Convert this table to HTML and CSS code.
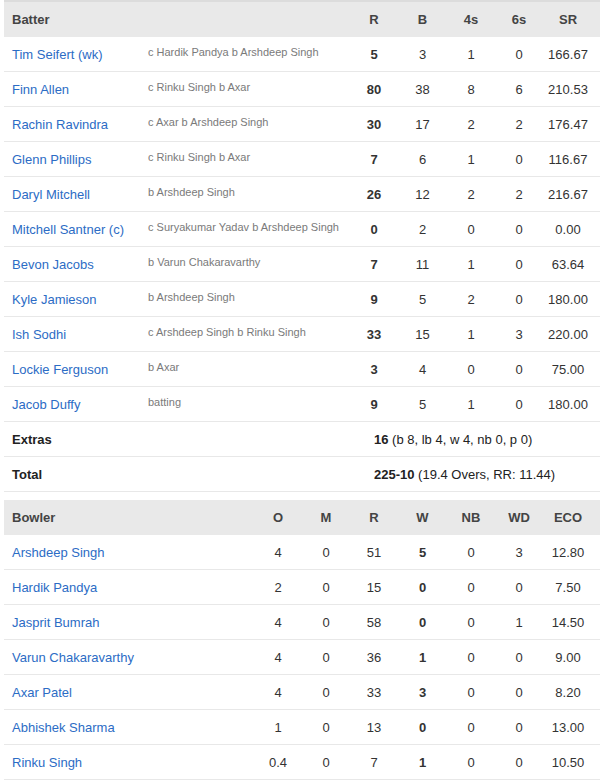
FILE: index.html
```html
<!DOCTYPE html>
<html>
<head>
<meta charset="utf-8">
<link rel="stylesheet" href="styles.css">
</head>
<body>
<div class="card">
  <div class="tbl bat">
    <div class="row head">
      <div class="c name">Batter</div><div class="c"></div>
      <div class="c n">R</div><div class="c n">B</div><div class="c n">4s</div><div class="c n">6s</div><div class="c n">SR</div>
    </div>
    <div class="row"><div class="c name"><a>Tim Seifert (wk)</a></div><div class="c dis">c Hardik Pandya b Arshdeep Singh</div><div class="c n b">5</div><div class="c n">3</div><div class="c n">1</div><div class="c n">0</div><div class="c n">166.67</div></div>
    <div class="row"><div class="c name"><a>Finn Allen</a></div><div class="c dis">c Rinku Singh b Axar</div><div class="c n b">80</div><div class="c n">38</div><div class="c n">8</div><div class="c n">6</div><div class="c n">210.53</div></div>
    <div class="row"><div class="c name"><a>Rachin Ravindra</a></div><div class="c dis">c Axar b Arshdeep Singh</div><div class="c n b">30</div><div class="c n">17</div><div class="c n">2</div><div class="c n">2</div><div class="c n">176.47</div></div>
    <div class="row"><div class="c name"><a>Glenn Phillips</a></div><div class="c dis">c Rinku Singh b Axar</div><div class="c n b">7</div><div class="c n">6</div><div class="c n">1</div><div class="c n">0</div><div class="c n">116.67</div></div>
    <div class="row"><div class="c name"><a>Daryl Mitchell</a></div><div class="c dis">b Arshdeep Singh</div><div class="c n b">26</div><div class="c n">12</div><div class="c n">2</div><div class="c n">2</div><div class="c n">216.67</div></div>
    <div class="row"><div class="c name"><a>Mitchell Santner (c)</a></div><div class="c dis">c Suryakumar Yadav b Arshdeep Singh</div><div class="c n b">0</div><div class="c n">2</div><div class="c n">0</div><div class="c n">0</div><div class="c n">0.00</div></div>
    <div class="row"><div class="c name"><a>Bevon Jacobs</a></div><div class="c dis">b Varun Chakaravarthy</div><div class="c n b">7</div><div class="c n">11</div><div class="c n">1</div><div class="c n">0</div><div class="c n">63.64</div></div>
    <div class="row"><div class="c name"><a>Kyle Jamieson</a></div><div class="c dis">b Arshdeep Singh</div><div class="c n b">9</div><div class="c n">5</div><div class="c n">2</div><div class="c n">0</div><div class="c n">180.00</div></div>
    <div class="row"><div class="c name"><a>Ish Sodhi</a></div><div class="c dis">c Arshdeep Singh b Rinku Singh</div><div class="c n b">33</div><div class="c n">15</div><div class="c n">1</div><div class="c n">3</div><div class="c n">220.00</div></div>
    <div class="row"><div class="c name"><a>Lockie Ferguson</a></div><div class="c dis">b Axar</div><div class="c n b">3</div><div class="c n">4</div><div class="c n">0</div><div class="c n">0</div><div class="c n">75.00</div></div>
    <div class="row"><div class="c name"><a>Jacob Duffy</a></div><div class="c dis">batting</div><div class="c n b">9</div><div class="c n">5</div><div class="c n">1</div><div class="c n">0</div><div class="c n">180.00</div></div>
    <div class="row sum"><div class="c name strong">Extras</div><div class="c"></div><div class="c val"><b>16</b> (b 8, lb 4, w 4, nb 0, p 0)</div></div>
    <div class="row sum"><div class="c name strong">Total</div><div class="c"></div><div class="c val"><b>225-10</b> (19.4 Overs, RR: 11.44)</div></div>
  </div>

  <div class="tbl bowl">
    <div class="row head">
      <div class="c name">Bowler</div>
      <div class="c n">O</div><div class="c n">M</div><div class="c n">R</div><div class="c n">W</div><div class="c n">NB</div><div class="c n">WD</div><div class="c n">ECO</div>
    </div>
    <div class="row"><div class="c name"><a>Arshdeep Singh</a></div><div class="c n">4</div><div class="c n">0</div><div class="c n">51</div><div class="c n b">5</div><div class="c n">0</div><div class="c n">3</div><div class="c n">12.80</div></div>
    <div class="row"><div class="c name"><a>Hardik Pandya</a></div><div class="c n">2</div><div class="c n">0</div><div class="c n">15</div><div class="c n b">0</div><div class="c n">0</div><div class="c n">0</div><div class="c n">7.50</div></div>
    <div class="row"><div class="c name"><a>Jasprit Bumrah</a></div><div class="c n">4</div><div class="c n">0</div><div class="c n">58</div><div class="c n b">0</div><div class="c n">0</div><div class="c n">1</div><div class="c n">14.50</div></div>
    <div class="row"><div class="c name"><a>Varun Chakaravarthy</a></div><div class="c n">4</div><div class="c n">0</div><div class="c n">36</div><div class="c n b">1</div><div class="c n">0</div><div class="c n">0</div><div class="c n">9.00</div></div>
    <div class="row"><div class="c name"><a>Axar Patel</a></div><div class="c n">4</div><div class="c n">0</div><div class="c n">33</div><div class="c n b">3</div><div class="c n">0</div><div class="c n">0</div><div class="c n">8.20</div></div>
    <div class="row"><div class="c name"><a>Abhishek Sharma</a></div><div class="c n">1</div><div class="c n">0</div><div class="c n">13</div><div class="c n b">0</div><div class="c n">0</div><div class="c n">0</div><div class="c n">13.00</div></div>
    <div class="row"><div class="c name"><a>Rinku Singh</a></div><div class="c n">0.4</div><div class="c n">0</div><div class="c n">7</div><div class="c n b">1</div><div class="c n">0</div><div class="c n">0</div><div class="c n">10.50</div></div>
  </div>
</div>
</body>
</html>
```

FILE: styles.css
```css
html, body {
  margin: 0;
  padding: 0;
  background: #fff;
}
body {
  font-family: "Liberation Sans", Arial, sans-serif;
  font-size: 13px;
  color: #333;
}
.card {
  margin-left: 4px;
  border-top: 2px solid #dcdcdc;
}
.tbl {
  display: flex;
  flex-direction: column;
}
.bowl {
  margin-top: 8px;
}
.row {
  display: grid;
  height: 35px;
  box-sizing: border-box;
  border-bottom: 1px solid #e8e8e8;
  align-items: center;
  padding-right: 7px;
}
.bat .row {
  grid-template-columns: 143px 203px 48px 49px 48px 48px 50px;
}
.bowl .row {
  grid-template-columns: 250px 48px 48px 48px 49px 48px 48px 50px;
}
.row.head {
  background: #e9e9e9;
  border-bottom: none;
  font-weight: bold;
  color: #444;
  height: 35px;
}
.bat .row.head {
  height: 35px;
}
.c {
  white-space: nowrap;
}
.name {
  padding-left: 8px;
}
.name a {
  color: #2c6cc5;
  text-decoration: none;
}
.dis {
  font-size: 11px;
  color: #7a7a7a;
  padding-bottom: 5px;
  padding-left: 1px;
}
.n {
  text-align: center;
  color: #333;
}
.n.b {
  font-weight: bold;
}
.head .n {
  color: #444;
}
.strong {
  font-weight: bold;
  color: #222;
}
.bat .row.sum {
  grid-template-columns: 143px 203px 1fr;
}
.val {
  padding-left: 24px;
  color: #222;
}
.val b {
  font-weight: bold;
}
```
